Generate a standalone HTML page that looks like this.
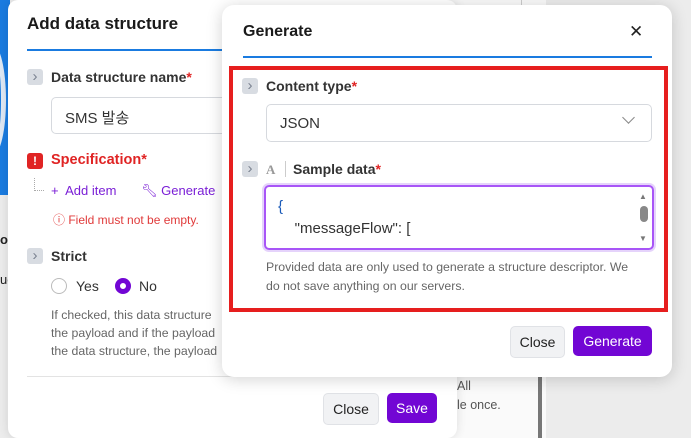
<!DOCTYPE html>
<html><head><meta charset="utf-8"><style>
*{box-sizing:border-box;margin:0;padding:0}
body{width:691px;height:438px;overflow:hidden;position:relative;background:#ececec;font-family:"Liberation Sans","Noto Sans CJK KR",sans-serif;color:#222}
.abs{position:absolute}
.chev{position:absolute;width:16px;height:16px;background:#d8dce2;border-radius:3px;color:#7a8290;font-size:15px;line-height:15px;text-align:center}
.lbl{position:absolute;font-size:14px;font-weight:bold;color:#333}
.req{color:#e02424}
.btn{position:absolute;border-radius:5px;font-size:14px;line-height:30px;text-align:center}
.g{background:#f1f2f4;border:1px solid #e0e2e6;color:#222}
.p{background:#7206d4;color:#fff}
</style></head><body>
<div class="abs" style="left:0;top:0;width:10px;height:195px;background:#1a7be0"></div>
<div class="abs" style="left:-20px;top:45px;width:26px;height:110px;border:5px solid #dfe8f3;border-radius:50%"></div>
<div class="abs" style="left:0;top:232px;font-size:13px;font-weight:bold">o</div>
<div class="abs" style="left:0;top:272px;font-size:13px">ue</div>
<div class="abs" style="left:440px;top:0;width:106px;height:438px;background:#fafafa"></div>
<div class="abs" style="left:521px;top:0;width:1px;height:20px;background:#ccc"></div>
<div class="abs" style="left:538px;top:377px;width:4px;height:61px;background:#777"></div>
<div class="abs" style="left:457px;top:377px;font-size:12.5px;color:#555;line-height:19px">All<br>le once.</div>

<div class="abs" style="left:8px;top:0;width:449px;height:438px;background:#fff;border-radius:10px;box-shadow:0 0 10px rgba(0,0,0,.12)">
</div>
<div class="abs" style="left:27px;top:14px;font-size:17px;font-weight:bold;color:#1a1a1a">Add data structure</div>
<div class="abs" style="left:27px;top:49px;width:200px;height:2px;background:#1a7be0"></div>
<div class="chev" style="left:27px;top:69px">›</div>
<div class="lbl" style="left:51px;top:69px">Data structure name<span class="req">*</span></div>
<div class="abs" style="left:51px;top:97px;width:180px;height:37px;border:1px solid #d6d9de;border-radius:5px;border-right:none;padding:9px 13px;font-size:15px;color:#333">SMS 발송</div>
<div class="abs" style="left:27px;top:153px;width:16px;height:16px;background:#e02424;border-radius:3px;color:#fff;font-weight:bold;font-size:12px;text-align:center;line-height:16px">!</div>
<div class="lbl" style="left:51px;top:152px;color:#e02424;font-size:14.5px">Specification<span>*</span></div>
<div class="abs" style="left:34px;top:178px;width:10px;height:13px;border-left:1px dotted #aaa;border-bottom:1px dotted #aaa"></div>
<div class="abs" style="left:51px;top:183px;font-size:13px;color:#7a1ed6">+&nbsp; Add item</div>
<div class="abs" style="left:141px;top:183px;font-size:13px;color:#7a1ed6">🔧︎ Generate</div>
<div class="abs" style="left:53px;top:211px;font-size:12px;color:#e03a3a">ⓘ Field must not be empty.</div>
<div class="chev" style="left:27px;top:248px">›</div>
<div class="lbl" style="left:51px;top:248px">Strict</div>
<div class="abs" style="left:51px;top:278px;width:16px;height:16px;border:1px solid #bbb;border-radius:50%"></div>
<div class="abs" style="left:76px;top:278px;font-size:14px;color:#333">Yes</div>
<div class="abs" style="left:115px;top:278px;width:16px;height:16px;border:5px solid #7206d4;border-radius:50%"></div>
<div class="abs" style="left:139px;top:278px;font-size:14px;color:#333">No</div>
<div class="abs" style="left:51px;top:306px;font-size:12.3px;color:#666;line-height:18px;width:180px;white-space:nowrap;overflow:hidden">If checked, this data structure<br>the payload and if the payload<br>the data structure, the payload</div>
<div class="abs" style="left:27px;top:376px;width:420px;height:1px;background:#e3e3e3"></div>
<div class="btn g" style="left:323px;top:393px;width:56px">Close</div>
<div class="btn p" style="left:387px;top:393px;width:50px">Save</div>

<div class="abs" style="left:222px;top:5px;width:450px;height:372px;background:#fff;border-radius:12px;box-shadow:0 2px 16px rgba(0,0,0,.18)"></div>
<div class="abs" style="left:243px;top:23px;font-size:16px;font-weight:bold;color:#1a1a1a">Generate</div>
<div class="abs" style="left:629px;top:22px;font-size:17px;color:#222">✕</div>
<div class="abs" style="left:243px;top:56px;width:409px;height:2px;background:#1a7be0"></div>
<div class="abs" style="left:229px;top:66px;width:439px;height:246px;border:4px solid #e61e1e"></div>
<div class="chev" style="left:242px;top:78px">›</div>
<div class="lbl" style="left:266px;top:78px">Content type<span class="req">*</span></div>
<div class="abs" style="left:266px;top:104px;width:386px;height:38px;border:1px solid #d6d9de;border-radius:5px;padding:10px 13px;font-size:15px;color:#333">JSON</div>
<div class="abs" style="left:624px;top:113px;width:9px;height:9px;border-right:1px solid #888;border-bottom:1px solid #888;transform:rotate(45deg)"></div>
<div class="chev" style="left:242px;top:161px">›</div>
<div class="abs" style="left:266px;top:162px;font-size:13px;font-weight:bold;color:#999;font-family:'Liberation Serif',serif">A</div>
<div class="abs" style="left:285px;top:161px;width:1px;height:16px;background:#ccc"></div>
<div class="lbl" style="left:293px;top:161px">Sample data<span class="req">*</span></div>
<div class="abs" style="left:264px;top:185px;width:390px;height:65px;border:2px solid #a855f7;border-radius:5px;box-shadow:0 0 0 2px #e5d3fb;padding:9px 12px;font-size:15px;line-height:22px;color:#333"><span style="color:#1a5ab8">{</span><br>&nbsp;&nbsp;&nbsp;&nbsp;"messageFlow": [</div>
<div class="abs" style="left:639px;top:192px;font-size:8px;color:#777">▲</div>
<div class="abs" style="left:640px;top:206px;width:8px;height:16px;background:#888;border-radius:4px"></div>
<div class="abs" style="left:639px;top:234px;font-size:8px;color:#777">▼</div>
<div class="abs" style="left:266px;top:258px;font-size:12.3px;color:#666;line-height:19px">Provided data are only used to generate a structure descriptor. We<br>do not save anything on our servers.</div>
<div class="btn g" style="left:510px;top:326px;width:55px">Close</div>
<div class="btn p" style="left:573px;top:326px;width:79px">Generate</div>
</body></html>
